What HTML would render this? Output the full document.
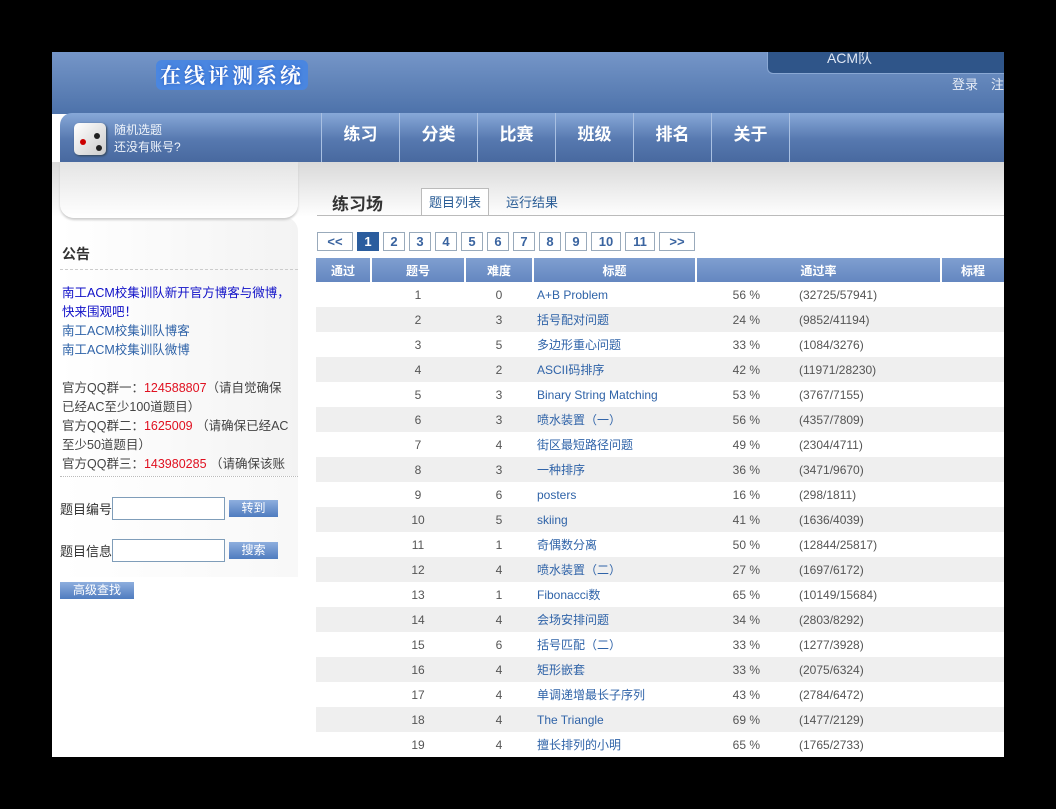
<!DOCTYPE html>
<html><head><meta charset="utf-8"><style>
*{margin:0;padding:0;box-sizing:border-box}
body{width:1056px;height:809px;background:#000;position:relative;overflow:hidden;font-family:"Liberation Sans","Noto Sans CJK SC",sans-serif;font-size:12px}
#page{position:absolute;left:52px;top:52px;width:952px;height:705px;background:#fff;overflow:hidden}
.hdr{position:absolute;left:0;top:0;width:952px;height:62px;background:linear-gradient(#7596c8,#4d72aa)}
.logo{position:absolute;left:104px;top:8px;height:30px;padding:0 4px;background:#4a86e0;border-radius:6px;color:#fff;font:bold 21px "Noto Serif CJK SC",serif;letter-spacing:3px;text-shadow:0 0 3px #2a5cc0;line-height:30px}
.acm{position:absolute;left:715px;top:0;width:250px;height:22px;background:#2f5589;border:1px solid #8aa8d4;border-top:none;border-radius:0 0 0 6px;color:#dfe7f4;font-size:14px;text-align:center}
.login{position:absolute;left:900px;top:22px;color:#e6ecf6;font-size:13px}
.nav{position:absolute;left:8px;top:61px;width:944px;height:49px;background:linear-gradient(#87a8d8,#5678af 55%,#48699f);border-radius:12px 0 0 0}
.nav .dice{position:absolute;left:14px;top:10px;width:32px;height:32px;background:linear-gradient(135deg,#fff,#ccc);border-radius:5px;box-shadow:1px 1px 2px #345}
.nav .dice i{position:absolute;width:6px;height:6px;border-radius:3px;background:#222}
.nav .t{position:absolute;left:54px;top:9px;color:#eef3fa;font-size:12px;line-height:17px}
.nav .m{position:absolute;top:0;height:49px;width:78px;border-left:1px solid #a9c0e2;color:#fff;font-size:17px;font-weight:bold;text-align:center;line-height:44px}
.gray{position:absolute;left:0;top:110px;width:952px;height:55px;background:linear-gradient(#d9d9d9,#fff)}
.left{position:absolute;left:8px;top:165px;width:238px;height:260px;background:linear-gradient(90deg,#fff,#f3f3f3);border-radius:0 14px 0 0}
.lwhite{position:absolute;left:8px;top:110px;width:238px;height:56px;background:linear-gradient(#e4e4e4,#fff);border-radius:0 0 14px 14px;box-shadow:0 2px 2px #ccc}
.title{position:absolute;left:280px;top:138px;font-size:17px;font-weight:bold;color:#333}
.tab1{position:absolute;left:369px;top:136px;width:68px;height:28px;border:1px solid #bbb;border-bottom:none;background:#fff;color:#2a5d96;font-size:13px;text-align:center;line-height:28px}
.tab2{position:absolute;left:454px;top:140px;color:#2a5d96;font-size:13px}
.tline{position:absolute;left:265px;top:163px;width:687px;height:1px;background:#bbb}
.pg{position:absolute;top:180px;height:19px;border:1px solid #9ab;color:#3a64a0;font-weight:bold;font-size:13px;text-align:center;line-height:17px;background:#fff}
.pg.on{background:#2b5d9e;color:#fff;border-color:#2b5d9e}
.ann{position:absolute;left:10px;top:192px;font-size:14px;font-weight:bold;color:#333}
.dash{position:absolute;left:8px;width:238px;border-top:1px dashed #ccc}
.atext{position:absolute;left:10px;top:232px;width:234px;font-size:12.5px;line-height:19px;color:#444}
.atext .b{color:#1010c8}.atext a{color:#2f63a8;text-decoration:none}.atext .r{color:#e01020}
.lab{position:absolute;left:8px;font-size:13px;color:#333}
.inp{position:absolute;left:60px;width:113px;height:23px;border:1px solid #7f9db9;background:#fff}
.btn{position:absolute;left:177px;width:49px;height:17px;background:linear-gradient(#8eaede,#4f7cbf);color:#fff;font-size:12px;text-align:center;line-height:17px}
table{position:absolute;left:264px;top:206px;border-collapse:collapse;width:688px}
th{height:24px;background:linear-gradient(#7f9fd0,#6487c0);color:#fff;font-size:12px;border-left:2px solid #fff;font-weight:bold}
td{height:25px;color:#555;font-size:12px}
tbody tr:nth-child(even) td{background:#efefef}
td.n,td.d{text-align:center}
td.t{color:#2f63a8;padding-left:4px}
</style></head><body>
<div id="page">
<div class="hdr"></div>
<div class="logo">在线评测系统</div>
<div class="acm"><span style="display:block;padding-right:85px;line-height:12px">ACM队</span></div>
<div class="login">登录　注</div>
<div class="nav">
 <div class="dice"><i style="left:6px;top:16px;background:#c00"></i><i style="left:20px;top:10px"></i><i style="left:22px;top:22px"></i></div>
 <div class="t">随机选题<br>还没有账号?</div>
 <div class="m" style="left:261px">练习</div>
 <div class="m" style="left:339px">分类</div>
 <div class="m" style="left:417px">比赛</div>
 <div class="m" style="left:495px">班级</div>
 <div class="m" style="left:573px">排名</div>
 <div class="m" style="left:651px">关于</div>
 <div class="m" style="left:729px"></div>
</div>
<div class="gray"></div>
<div class="left"></div>
<div class="lwhite"></div>
<div class="title">练习场</div>
<div class="tab1">题目列表</div>
<div class="tab2">运行结果</div>
<div class="tline"></div>
<div class="pg" style="left:265px;width:36px">&lt;&lt;</div>
<div class="pg on" style="left:305px;width:22px">1</div>
<div class="pg" style="left:331px;width:22px">2</div>
<div class="pg" style="left:357px;width:22px">3</div>
<div class="pg" style="left:383px;width:22px">4</div>
<div class="pg" style="left:409px;width:22px">5</div>
<div class="pg" style="left:435px;width:22px">6</div>
<div class="pg" style="left:461px;width:22px">7</div>
<div class="pg" style="left:487px;width:22px">8</div>
<div class="pg" style="left:513px;width:22px">9</div>
<div class="pg" style="left:539px;width:30px">10</div>
<div class="pg" style="left:573px;width:30px">11</div>
<div class="pg" style="left:607px;width:36px">&gt;&gt;</div>
<div class="ann">公告</div>
<div class="dash" style="top:217px"></div>
<div class="atext"><span class="b">南工ACM校集训队新开官方博客与微博，<br>快来围观吧！</span><br><a>南工ACM校集训队博客</a><br><a>南工ACM校集训队微博</a><br><br>官方QQ群一：<span class="r">124588807</span>（请自觉确保<br>已经AC至少100道题目）<br>官方QQ群二：<span class="r">1625009</span> （请确保已经AC<br>至少50道题目）<br>官方QQ群三：<span class="r">143980285</span> （请确保该账</div>
<div style="position:absolute;left:8px;top:424px;width:238px;height:2px;border-top:1px dotted #bbb;background:#fff"></div>
<div style="position:absolute;left:8px;top:425px;width:238px;height:100px;background:linear-gradient(90deg,#fff,#f8f8f8)"></div>
<div class="lab" style="top:447px">题目编号</div><div class="inp" style="top:445px"></div><div class="btn" style="top:448px">转到</div>
<div class="lab" style="top:489px">题目信息</div><div class="inp" style="top:487px"></div><div class="btn" style="top:490px">搜索</div>
<div class="btn" style="left:8px;top:530px;width:74px">高级查找</div>
<table>
<thead><tr><th style="width:55px;border-left:none">通过</th><th style="width:94px">题号</th><th style="width:68px">难度</th><th style="width:163px">标题</th><th style="width:245px">通过率</th><th>标程</th></tr></thead>
<tbody id="tb"></tbody>
</table>
</div>
<script>
var d=[[1,0,"A+B Problem",56,"32725/57941"],[2,3,"括号配对问题",24,"9852/41194"],[3,5,"多边形重心问题",33,"1084/3276"],[4,2,"ASCII码排序",42,"11971/28230"],[5,3,"Binary String Matching",53,"3767/7155"],[6,3,"喷水装置（一）",56,"4357/7809"],[7,4,"街区最短路径问题",49,"2304/4711"],[8,3,"一种排序",36,"3471/9670"],[9,6,"posters",16,"298/1811"],[10,5,"skiing",41,"1636/4039"],[11,1,"奇偶数分离",50,"12844/25817"],[12,4,"喷水装置（二）",27,"1697/6172"],[13,1,"Fibonacci数",65,"10149/15684"],[14,4,"会场安排问题",34,"2803/8292"],[15,6,"括号匹配（二）",33,"1277/3928"],[16,4,"矩形嵌套",33,"2075/6324"],[17,4,"单调递增最长子序列",43,"2784/6472"],[18,4,"The Triangle",69,"1477/2129"],[19,4,"擅长排列的小明",65,"1765/2733"]];
var h="";d.forEach(function(r){h+='<tr><td></td><td class="n">'+r[0]+'</td><td class="d">'+r[1]+'</td><td class="t">'+r[2]+'</td><td><span style="display:inline-block;width:64px;text-align:right">'+r[3]+' %</span><span style="padding-left:39px">('+r[4]+')</span></td><td></td></tr>';});
document.getElementById("tb").innerHTML=h;
</script>
</body></html>
